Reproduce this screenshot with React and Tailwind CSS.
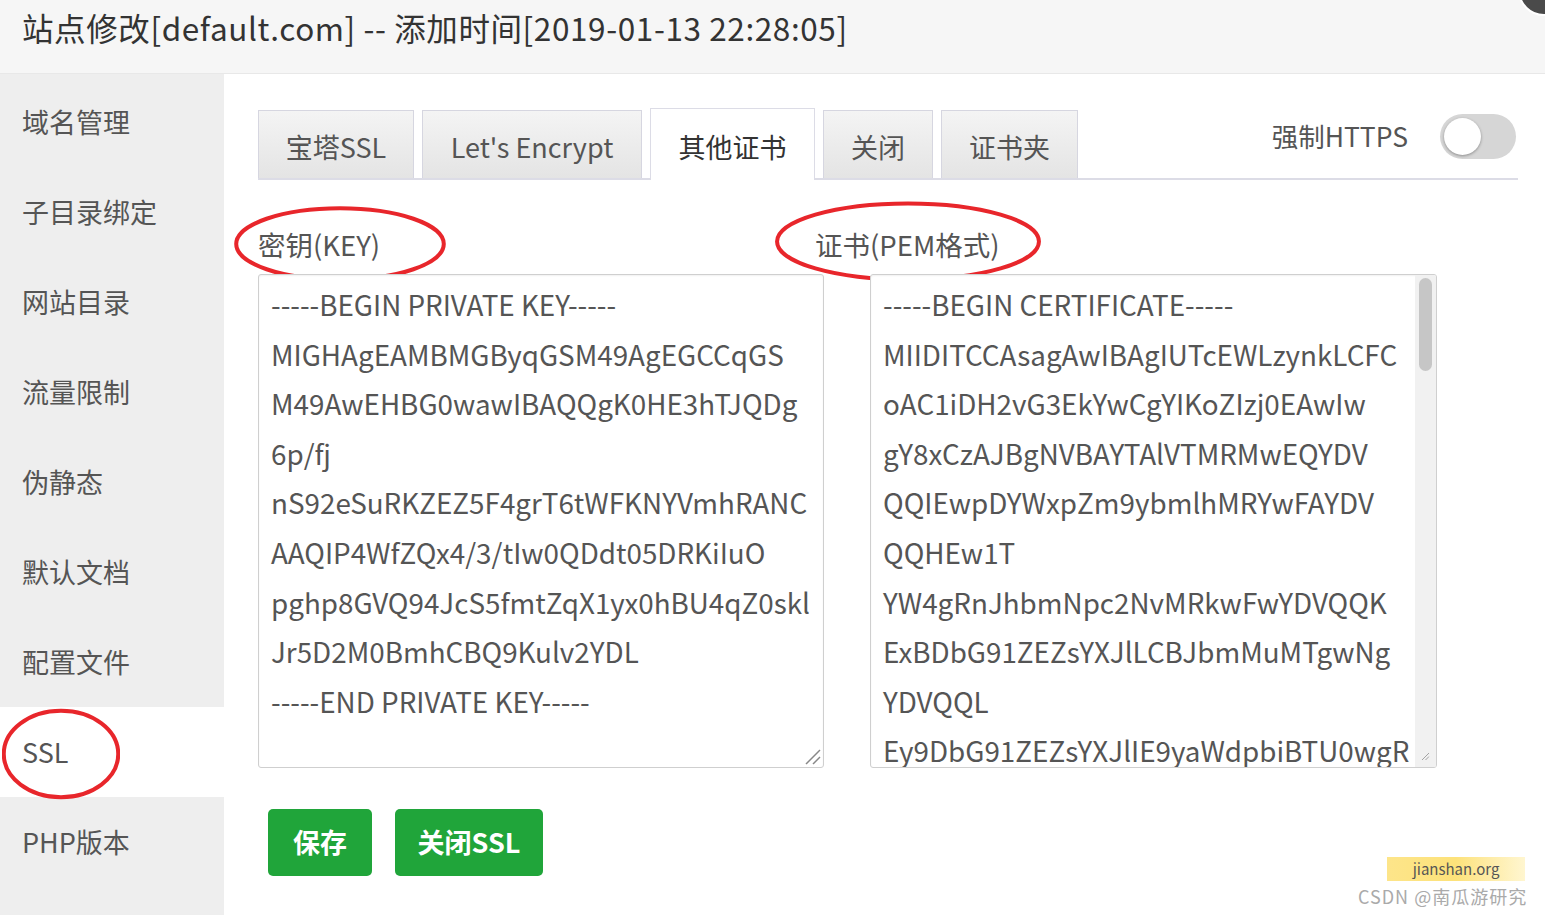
import React from 'react';

const FONT = { fontFamily: '"Segoe UI", "Noto Sans CJK SC", "Noto Sans", sans-serif' };

const menu = ['域名管理', '子目录绑定', '网站目录', '流量限制', '伪静态', '默认文档', '配置文件', 'SSL', 'PHP版本'];

const tabs = [
  { label: '宝塔SSL', w: 'w-[156px]' },
  { label: "Let's Encrypt", w: 'w-[220px]' },
  { label: '其他证书', w: 'w-[165px]', active: true },
  { label: '关闭', w: 'w-[110px]' },
  { label: '证书夹', w: 'w-[137px]' },
];

const keyLines = [
  '-----BEGIN PRIVATE KEY-----',
  'MIGHAgEAMBMGByqGSM49AgEGCCqGS',
  'M49AwEHBG0wawIBAQQgK0HE3hTJQDg',
  '6p/fj',
  'nS92eSuRKZEZ5F4grT6tWFKNYVmhRANC',
  'AAQIP4WfZQx4/3/tIw0QDdt05DRKiIuO',
  'pghp8GVQ94JcS5fmtZqX1yx0hBU4qZ0skl',
  'Jr5D2M0BmhCBQ9Kulv2YDL',
  '-----END PRIVATE KEY-----',
];

const certLines = [
  '-----BEGIN CERTIFICATE-----',
  'MIIDITCCAsagAwIBAgIUTcEWLzynkLCFC',
  'oAC1iDH2vG3EkYwCgYIKoZIzj0EAwIw',
  'gY8xCzAJBgNVBAYTAlVTMRMwEQYDV',
  'QQIEwpDYWxpZm9ybmlhMRYwFAYDV',
  'QQHEw1T',
  'YW4gRnJhbmNpc2NvMRkwFwYDVQQK',
  'ExBDbG91ZEZsYXJlLCBJbmMuMTgwNg',
  'YDVQQL',
  'Ey9DbG91ZEZsYXJlIE9yaWdpbiBTU0wgR',
];

function Ellipse({ className }) {
  return (
    <svg className={`absolute pointer-events-none ${className}`} viewBox="0 0 100 100" preserveAspectRatio="none">
      <ellipse cx="50" cy="50" rx="48.5" ry="47" fill="none" stroke="#e8262b" strokeWidth="4" vectorEffect="non-scaling-stroke" />
    </svg>
  );
}

function ResizeGrip({ className }) {
  return (
    <svg className={`absolute ${className}`} width="18" height="18" viewBox="0 0 18 18">
      <line x1="17" y1="3" x2="3" y2="17" stroke="#888" strokeWidth="1.5" />
      <line x1="17" y1="10" x2="10" y2="17" stroke="#888" strokeWidth="1.5" />
    </svg>
  );
}

function CodeBox({ lines, scroll }) {
  return (
    <div className="relative h-[494px] border border-[#cfcfcf] rounded-[3px] bg-white overflow-hidden shadow-[inset_0_1px_2px_rgba(0,0,0,0.06)]">
      <div className="pl-[12px] pt-[5px] text-[27.8px] leading-[49.6px] text-[#555] whitespace-pre">
        {lines.map((l, i) => (
          <div key={i}>{l}</div>
        ))}
      </div>
      {scroll ? (
        <>
          <div className="absolute right-0 top-0 bottom-0 w-[21px] bg-[#f1f1f1]">
            <div className="mx-auto mt-[3px] w-[13px] h-[93px] rounded-full bg-[#c6c6c6]" />
          </div>
          <div className="absolute right-0 bottom-0 w-[21px] h-[21px] bg-[#f1f1f1]" />
          <ResizeGrip className="right-[2px] bottom-[2px] scale-50" />
        </>
      ) : (
        <ResizeGrip className="right-[2px] bottom-[2px]" />
      )}
    </div>
  );
}

export default function App() {
  return (
    <div className="relative w-[1545px] h-[915px] overflow-hidden bg-white text-[#333]" style={FONT}>
      {/* 标题栏 */}
      <div className="h-[74px] bg-[#f6f6f6] border-b border-[#e8e8e8] pl-[22px] pt-[6px]">
        <div className="text-[31.5px] leading-[42px] tracking-[0.6px] text-[#333]">
          站点修改[default.com] -- 添加时间[2019-01-13 22:28:05]
        </div>
      </div>
      <div className="absolute left-[1518px] top-[-36px] w-[52px] h-[52px] rounded-full bg-[#4a4a4a] border-2 border-white" />

      <div className="flex h-[841px]">
        {/* 左侧菜单 */}
        <div className="w-[224px] bg-[#eeeeee] pt-[3px]">
          {menu.map((m) => (
            <div
              key={m}
              className={`relative h-[90px] flex items-center pl-[22px] text-[27px] text-[#555] ${
                m === 'SSL' ? 'bg-white' : ''
              }`}
            >
              {m}
              {m === 'SSL' && <Ellipse className="left-[2px] top-[1px] w-[118px] h-[92px]" />}
            </div>
          ))}
        </div>

        {/* 主内容 */}
        <div className="flex-1 pl-[34px] pr-[27px] pt-[36px]">
          <div className="flex items-end h-[70px] border-b-2 border-[#dcdce6]">
            <div className="flex items-end gap-[8px] h-full">
              {tabs.map((t) => (
                <div
                  key={t.label}
                  className={`${t.w} flex items-center justify-center text-[27px] border border-b-0 pt-[6px] ${
                    t.active
                      ? 'bg-white border-[#dcdce6] text-[#333] -mb-[2px] h-[72px]'
                      : 'h-full bg-gradient-to-b from-[#f4f4f4] to-[#e4e4e4] border-[#d6d6e0] text-[#555]'
                  }`}
                >
                  {t.label}
                </div>
              ))}
            </div>
            <div className="ml-auto self-start flex items-center h-[52px]">
              <span className="text-[26.5px] text-[#555] mr-[32px]">强制HTTPS</span>
              <div className="w-[76px] h-[45px] rounded-full bg-[#d6d6d6] p-[4px] mr-[2px]">
                <div className="w-[37px] h-[37px] rounded-full bg-white shadow-[0_1px_3px_rgba(0,0,0,0.35)]" />
              </div>
            </div>
          </div>

          <div className="flex gap-[46px]">
            <div className="w-[566px]">
              <div className="relative mt-[46px] mb-[12px] h-[36px] leading-[36px] text-[27.5px] text-[#555]">
                密钥(KEY)
                <Ellipse className="left-[-25px] top-[-20px] w-[214px] h-[76px]" />
              </div>
              <CodeBox lines={keyLines} />
            </div>
            <div className="w-[567px]">
              <div className="relative mt-[46px] mb-[12px] -ml-[55px] h-[36px] leading-[36px] text-[27.5px] text-[#555]">
                证书(PEM格式)
                <Ellipse className="left-[-42px] top-[-25px] w-[270px] h-[81px]" />
              </div>
              <CodeBox lines={certLines} scroll />
            </div>
          </div>

          <div className="flex gap-[23px] mt-[41px] ml-[10px]">
            <button className="w-[104px] h-[67px] rounded-[5px] bg-[#20a53a] text-white text-[27px] font-semibold">
              保存
            </button>
            <button className="w-[148px] h-[67px] rounded-[5px] bg-[#20a53a] text-white text-[27px] font-semibold">
              关闭SSL
            </button>
          </div>
        </div>
      </div>

      {/* 水印 */}
      <div className="absolute left-[1387px] top-[857px] w-[138px] h-[24px] bg-gradient-to-r from-[#fde58a] via-[#fde27a] to-[#fff6d0] flex items-center justify-center text-[15px] text-[#555]">
        jianshan.org
      </div>
      <div className="absolute left-[1358px] top-[883px] text-[18px] text-[#aaa] tracking-[1px]">
        CSDN @南瓜游研究
      </div>
    </div>
  );
}
